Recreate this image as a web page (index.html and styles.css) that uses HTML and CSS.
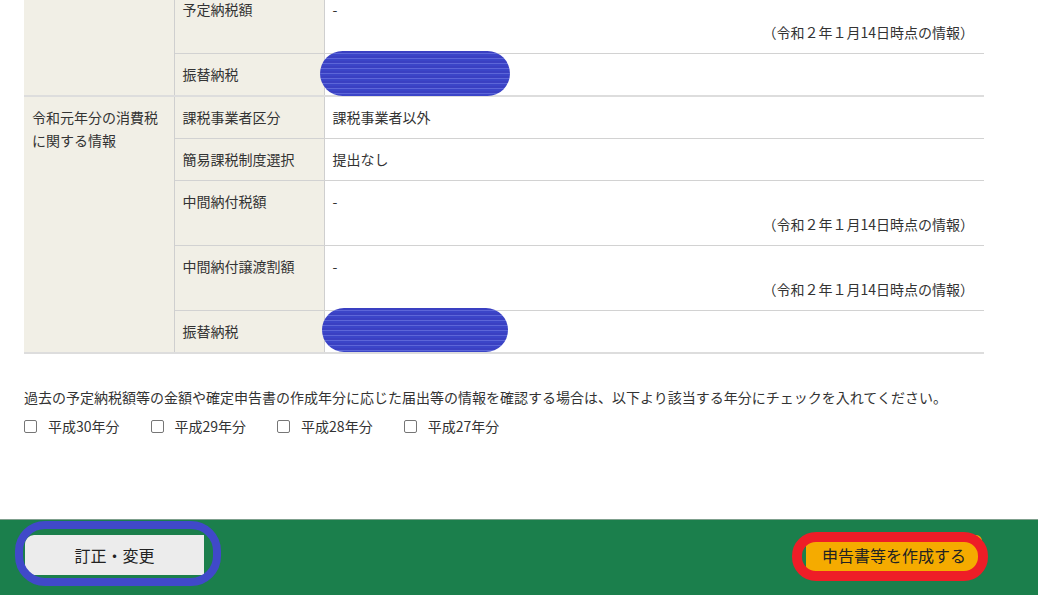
FILE: index.html
```html
<!DOCTYPE html>
<html lang="ja">
<head>
<meta charset="utf-8">
<title>申告</title>
<link rel="stylesheet" href="styles.css">
</head>
<body>
<main class="main">
  <div class="sheet">
    <table class="info">
      <colgroup><col class="c1"><col class="c2"><col class="c3"></colgroup>
      <tr>
        <td class="head end" rowspan="2"></td>
        <td class="label">予定納税額</td>
        <td class="value"><div>-</div><div class="note">（令和２年１月14日時点の情報）</div></td>
      </tr>
      <tr class="end">
        <td class="label">振替納税</td>
        <td class="value"></td>
      </tr>
      <tr>
        <td class="head end" rowspan="5">令和元年分の消費税に関する情報</td>
        <td class="label">課税事業者区分</td>
        <td class="value">課税事業者以外</td>
      </tr>
      <tr>
        <td class="label">簡易課税制度選択</td>
        <td class="value">提出なし</td>
      </tr>
      <tr>
        <td class="label">中間納付税額</td>
        <td class="value"><div>-</div><div class="note">（令和２年１月14日時点の情報）</div></td>
      </tr>
      <tr>
        <td class="label">中間納付譲渡割額</td>
        <td class="value"><div>-</div><div class="note">（令和２年１月14日時点の情報）</div></td>
      </tr>
      <tr class="end">
        <td class="label">振替納税</td>
        <td class="value"></td>
      </tr>
    </table>
    <span class="scribble s1"></span>
    <span class="scribble s2"></span>
  </div>
  <p class="lead">過去の予定納税額等の金額や確定申告書の作成年分に応じた届出等の情報を確認する場合は、以下より該当する年分にチェックを入れてください。</p>
  <div class="years">
    <label class="year"><input type="checkbox" class="box">平成30年分</label>
    <label class="year"><input type="checkbox" class="box">平成29年分</label>
    <label class="year"><input type="checkbox" class="box">平成28年分</label>
    <label class="year"><input type="checkbox" class="box">平成27年分</label>
  </div>
</main>
<footer class="footer">
  <div class="bar">
    <button class="btn btn-gray">訂正・変更</button>
    <button class="btn btn-orange">申告書等を作成する</button>
  </div>
  <span class="ring ring-blue"></span>
  <span class="ring ring-red"></span>
</footer>
</body>
</html>
```

FILE: styles.css
```css
html, body {
  margin: 0;
  padding: 0;
}
body {
  height: 595px;
  overflow: hidden;
  display: flex;
  flex-direction: column;
  background: #fff;
  color: #333;
  font-family: "Noto Sans CJK JP", "Noto Sans", sans-serif;
  font-size: 14px;
}
.main {
  flex: 1;
  margin-top: -11px;
  padding: 0 24px;
}
.sheet {
  position: relative;
  width: 960px;
}
.info {
  width: 960px;
  border-collapse: collapse;
  table-layout: fixed;
}
.c1 { width: 150px; }
.c2 { width: 150px; }
.info td {
  vertical-align: top;
  padding: 9px 8px 9px 8px;
  line-height: 23px;
  border-bottom: 1px solid #d2d2d2;
}
.info tr.end td,
.info td.end {
  border-bottom: 2px solid #dddddd;
}
.head {
  background: #f1efe6;
  border-right: 1px solid #cfcfcf;
  padding-left: 8px;
}
.label {
  background: #f1efe6;
  border-right: 1px solid #cfcfcf;
}
.value {
  background: #fff;
}
.note {
  text-align: right;
  padding-right: 2px;
}
.scribble {
  position: absolute;
  display: block;
  border-radius: 23px;
  background-color: #3a43c6;
  background-image: repeating-linear-gradient(180deg, #3a40c2 0 2px, #5c66d8 2px 3px, #3b45c8 3px 5px);
}
.s1 { left: 296px; top: 62px; width: 190px; height: 45px; }
.s2 { left: 298px; top: 319px; width: 186px; height: 44px; }
.lead {
  margin: 32px 0 0;
  line-height: 22px;
}
.years {
  display: flex;
  margin-top: 7px;
  line-height: 22px;
}
.year {
  display: flex;
  align-items: center;
  margin-right: 31px;
}
.box {
  appearance: none;
  -webkit-appearance: none;
  width: 13px;
  height: 13px;
  margin: 0 11px 0 0;
  border: 1px solid #767676;
  border-radius: 2px;
  background: #fff;
}
.footer {
  position: relative;
  height: 75px;
  flex: none;
  background: #1b7f4c;
  border-top: 1px solid #7fa08d;
}
.bar {
  width: 957px;
  margin-left: 25px;
  padding-top: 15px;
  display: flex;
  justify-content: space-between;
}
.btn {
  height: 40px;
  border: none;
  font-family: "Noto Sans CJK JP", "Noto Sans", sans-serif;
  font-size: 16px;
  color: #222;
  padding: 0;
}
.btn-gray {
  width: 179px;
  background: #ececec;
  border-radius: 9px 0 0 9px;
}
.btn-orange {
  width: 176px;
  background: #f5ab00;
  border-radius: 6px;
}
.ring {
  position: absolute;
  display: block;
  box-sizing: border-box;
}
.ring-blue {
  left: 15px;
  top: 1px;
  width: 206px;
  height: 65px;
  border: 8px solid #4049c9;
  border-radius: 30px;
}
.ring-red {
  left: 792px;
  top: 12px;
  width: 196px;
  height: 49px;
  border: 10px solid #ee1d27;
  border-radius: 24px;
}
```
